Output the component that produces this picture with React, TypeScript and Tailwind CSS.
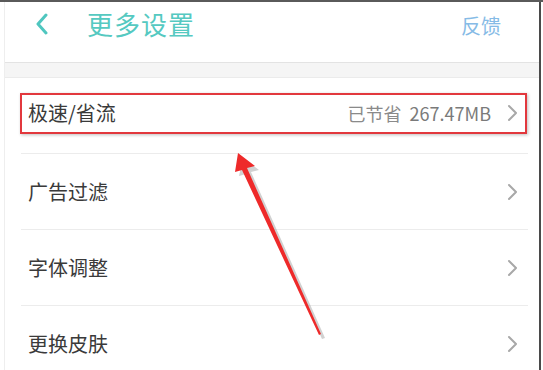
const ROWS = [
  { label: "极速/省流", value: "已节省 267.47MB" },
  { label: "广告过滤" },
  { label: "字体调整" },
  { label: "更换皮肤" },
];

const FONT = { fontFamily: '"Noto Sans CJK SC", "Noto Sans", sans-serif' };

function Chevron({ className }: { className?: string }) {
  return (
    <svg width="11" height="18" viewBox="0 0 11 18" className={className} fill="none">
      <path d="M2 2l7 7-7 7" stroke="currentColor" strokeWidth="2" strokeLinecap="round" strokeLinejoin="round" />
    </svg>
  );
}

export default function App() {
  return (
    <div className="relative w-[543px] h-[370px] overflow-hidden bg-white border-t-2 border-[#5a5a5a]" style={FONT}>
      <div className="ml-[4px] w-[537px] h-full border-l border-r-2 border-l-[#eeeeee] border-r-[#4a4a4a]">
        {/* header */}
        <div className="h-[60px] flex items-center pl-[29px] pr-[38px]">
          <svg width="16" height="22" viewBox="0 0 16 22" fill="none" className="text-[#4fc6bf] -mt-[16px]">
            <path d="M12 2L4 11l8 9" stroke="currentColor" strokeWidth="3" strokeLinecap="round" strokeLinejoin="round" />
          </svg>
          <span className="ml-[37px] -mt-[17px] text-[26px] tracking-[1px] text-[#55c9c1]">更多设置</span>
          <span className="ml-auto -mt-[12px] text-[20px] text-[#86bbe6]">反馈</span>
        </div>
        <div className="h-[16px] bg-[#f5f5f5] border-t border-b border-t-[#e3e3e3] border-b-[#ebebeb]" />

        {/* list */}
        <div>
          {ROWS.map((r, i) => (
            <div key={r.label} className="ml-[16px] mr-[11px] h-[76px] flex items-center pl-[7px] pr-[10px] border-b border-[#ececec]">
              <span className={`text-[20px] text-[#3a3a3a] ${i === 0 ? "-mt-[5px]" : ""}`}>{r.label}</span>
              {r.value && (
                <span className="ml-auto mr-[16px] -mt-[5px] text-[18px] text-[#7a7a7a]">
                  <span className="text-[#8a8a8a]">已节省</span>
                  <span className="ml-[8px]">267.47MB</span>
                </span>
              )}
              <Chevron className={`text-[#a8a8a8] ${r.value ? "-mt-[5px]" : "ml-auto"}`} />
            </div>
          ))}
        </div>
      </div>

      {/* annotation box */}
      <div className="absolute left-[20px] top-[91px] w-[507px] h-[41px] border-2 border-[#e2383d] shadow-[1px_1px_3px_rgba(0,0,0,0.25)]" />

      {/* annotation arrow */}
      <svg className="absolute left-0 top-0" width="543" height="370" viewBox="0 0 543 370">
        <polygon points="241,154 257,166 249,168 323,334 320,335 244,170 237,172" fill="#9a9a9a" opacity="0.45" transform="translate(2,2)" />
        <polygon points="238,151 255,164 247,166 321,332 319,333 242,168 235,170" fill="#ee2a2a" />
      </svg>
    </div>
  );
}
